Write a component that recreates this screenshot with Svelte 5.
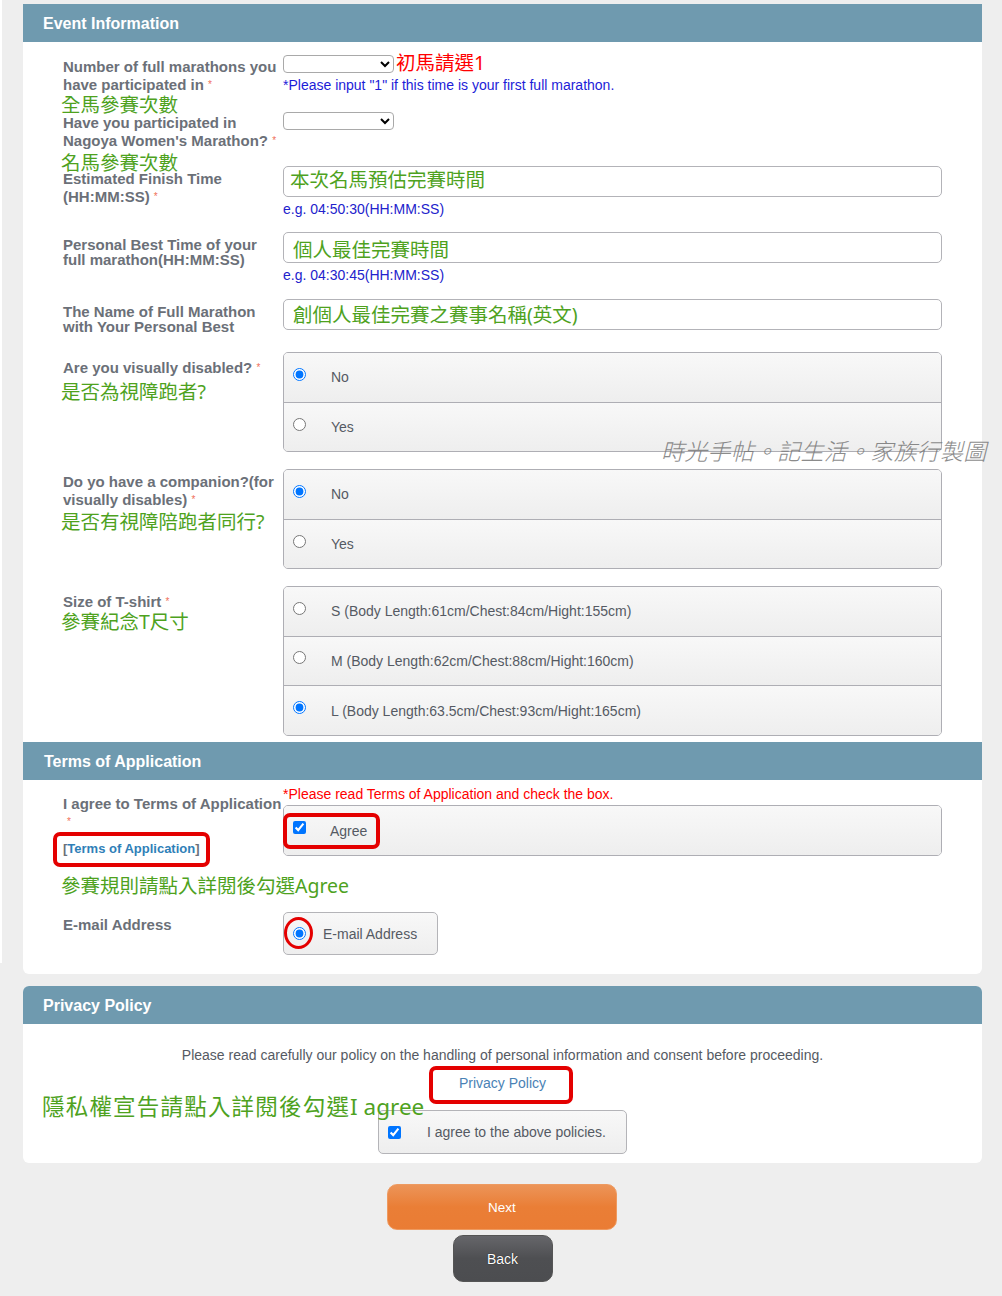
<script>
  const sizes = [
    { label: 'S (Body Length:61cm/Chest:84cm/Hight:155cm)', checked: false },
    { label: 'M (Body Length:62cm/Chest:88cm/Hight:160cm)', checked: false },
    { label: 'L (Body Length:63.5cm/Chest:93cm/Hight:165cm)', checked: true }
  ];
</script>

<div class="strip"></div>
<main class="page">
  <section class="card first">
    <h2>Event Information</h2>

    <div class="row r1">
      <div class="lab tall">Number of full marathons you have participated in <span class="req">*</span></div>
      <div class="ctl">
        <select class="sel"><option></option></select>
        <div class="note blue">*Please input "1" if this time is your first full marathon.</div>
      </div>
    </div>

    <div class="row r2">
      <div class="lab tall">Have you participated in Nagoya Women's Marathon? <span class="req">*</span></div>
      <div class="ctl"><select class="sel"><option></option></select></div>
    </div>

    <div class="row r3">
      <div class="lab tall">Estimated Finish Time (HH:MM:SS) <span class="req">*</span></div>
      <div class="ctl">
        <div class="inp in1">本次名馬預估完賽時間</div>
        <div class="hint">e.g. 04:50:30(HH:MM:SS)</div>
      </div>
    </div>

    <div class="row r4">
      <div class="lab">Personal Best Time of your full marathon(HH:MM:SS)</div>
      <div class="ctl">
        <div class="inp in2">個人最佳完賽時間</div>
        <div class="hint">e.g. 04:30:45(HH:MM:SS)</div>
      </div>
    </div>

    <div class="row r5">
      <div class="lab">The Name of Full Marathon with Your Personal Best</div>
      <div class="ctl"><div class="inp in3">創個人最佳完賽之賽事名稱(英文)</div></div>
    </div>

    <div class="row r6">
      <div class="lab">Are you visually disabled? <span class="req">*</span></div>
      <div class="group">
        <label class="opt"><input type="radio" name="vd" checked /><span>No</span></label>
        <label class="opt"><input type="radio" name="vd" /><span>Yes</span></label>
      </div>
    </div>

    <div class="row r7">
      <div class="lab tall">Do yo have a companion?(for visually disables) <span class="req">*</span></div>
      <div class="group">
        <label class="opt"><input type="radio" name="co" checked /><span>No</span></label>
        <label class="opt"><input type="radio" name="co" /><span>Yes</span></label>
      </div>
    </div>

    <div class="row r8">
      <div class="lab">Size of T-shirt <span class="req">*</span></div>
      <div class="group">
        {#each sizes as s}
          <label class="opt"><input type="radio" name="sz" checked={s.checked} /><span>{s.label}</span></label>
        {/each}
      </div>
    </div>

    <h2 class="terms">Terms of Application</h2>

    <div class="row r9">
      <div class="lab tall lab9">
        <div class="nowrap">I agree to Terms of Application</div>
        <div class="req star">*</div>
        <a class="tlink" href="#terms">[<span>Terms of Application</span>]</a>
      </div>
      <div class="ctl">
        <div class="note red">*Please read Terms of Application and check the box.</div>
        <div class="group agree">
          <label class="opt"><input type="checkbox" checked /><span>Agree</span></label>
        </div>
      </div>
    </div>

    <div class="row r10">
      <div class="lab">E-mail Address</div>
      <label class="mailbox"><input type="radio" checked /><span>E-mail Address</span></label>
    </div>

    <div class="an red-an a1">初馬請選1</div>
    <div class="an a2">全馬參賽次數</div>
    <div class="an a3">名馬參賽次數</div>
    <div class="an a4">是否為視障跑者?</div>
    <div class="an a5">是否有視障陪跑者同行?</div>
    <div class="an a6">參賽紀念T尺寸</div>
    <div class="an a7">參賽規則請點入詳閱後勾選Agree</div>
    <div class="ring b1"></div>
    <div class="ring b2"></div>
    <div class="ring b3"></div>
    <div class="mark">時光手帖。記生活。家族行製圖</div>
  </section>

  <section class="card second">
    <h2>Privacy Policy</h2>
    <p class="policy">Please read carefully our policy on the handling of personal information and consent before proceeding.</p>
    <a class="plink" href="#privacy">Privacy Policy</a>
    <label class="pagree"><input type="checkbox" checked /><span>I agree to the above policies.</span></label>
    <div class="an a8"><span class="wide">隱私權宣告請點入詳閱後勾選</span>I agree</div>
    <div class="ring b4"></div>
  </section>

  <div class="actions">
    <button class="btn next">Next</button>
    <button class="btn back">Back</button>
  </div>
</main>

<style>
  :global(body) { margin: 0; background: #eee; }
  .strip { position: absolute; left: 0; top: 0; width: 2px; height: 963px; background: #fff; }
  .page {
    box-sizing: border-box;
    height: 1296px;
    padding: 4px 20px 0 23px;
    font-family: "Liberation Sans", Arial, sans-serif;
    color: #5b6069;
  }
  .card { position: relative; background: #fff; border-radius: 0 0 6px 6px; }
  .first { height: 970px; }
  .second { height: 177px; margin-top: 12px; border-radius: 6px; }
  h2 {
    margin: 0;
    height: 38px;
    line-height: 39px;
    padding-left: 20px;
    background: #6f9aaf;
    color: #fff;
    font-size: 16px;
    font-weight: 700;
    box-sizing: border-box;
  }
  .second h2 { border-radius: 6px 6px 0 0; }
  .terms { position: absolute; left: 0; right: 0; top: 738px; padding-left: 21px; }

  .row { box-sizing: border-box; display: grid; grid-template-columns: 220px 659px; padding-left: 40px; }
  .lab { font-size: 15px; font-weight: 700; color: #6b7078; line-height: 15px; }
  .tall { line-height: 18px; }
  .req { color: #f0705a; font-size: 10px; font-weight: 400; vertical-align: 2px; }
  .sel {
    display: block;
    width: 111px;
    height: 18px;
    box-sizing: border-box;
    background: #fff;
    border: 1px solid #a9a9a9;
    border-radius: 4px;
    font-size: 12px;
    padding: 0;
  }
  .note { font-size: 14px; line-height: 16px; }
  .blue { color: #1c1cd8; margin-top: 4px; }
  .red { color: #f00; height: 19px; margin-top: 6px; }

  .r1 { padding-top: 13px; height: 70px; }
  .r1 .lab { margin-top: 3px; }
  .r2 { height: 41px; }
  .r2 .lab { margin-top: 2px; }
  .r3 { margin-top: 13px; height: 53px; }
  .r3 .lab { margin-top: 4px; }
  .r4 { margin-top: 13px; height: 54px; }
  .r4 .lab { margin-top: 5px; }
  .r5 { margin-top: 13px; height: 30px; }
  .r5 .lab { margin-top: 5px; }
  .r6 { margin-top: 23px; height: 100px; }
  .r6 .lab { margin-top: 8px; }
  .r7 { margin-top: 17px; height: 100px; }
  .r7 .lab { margin-top: 4px; }
  .r8 { margin-top: 17px; height: 150px; }
  .r8 .lab { margin-top: 8px; }

  .inp {
    box-sizing: border-box;
    height: 31px;
    border: 1px solid #b3b3b8;
    border-radius: 5px;
    padding-left: 9px;
    font: 400 19.5px/27px "Noto Sans", "Noto Sans CJK TC", sans-serif;
    color: #4ea21e;
    background: #fff;
    white-space: nowrap;
  }
  .in1 { padding-left: 6px; line-height: 25px; }
  .in2 { line-height: 33px; }
  .in3 { line-height: 29px; }
  .hint { font-size: 14px; line-height: 16px; color: #2222cc; margin-top: 4px; }

  .group {
    box-sizing: border-box;
    border: 1px solid #aeaeb4;
    border-radius: 5px;
    overflow: hidden;
    background: #f1f1f1;
  }
  .opt {
    box-sizing: border-box;
    display: flex;
    align-items: center;
    height: 49.5px;
    padding-left: 9px;
    font-size: 14px;
    color: #555a63;
    background: linear-gradient(#f8f8f8, #eeeeee);
    border-bottom: 1px solid #aeaeb4;
  }
  .opt:last-child { border-bottom: 0; }
  input[type="radio"], input[type="checkbox"] { margin: 0; width: 13px; height: 13px; flex: none; position: relative; top: -3px; }
  .opt span { margin-left: 25px; }

  .r9 { position: absolute; top: 776px; left: 0; width: 100%; }
  .lab9 { padding-top: 15px; }
  .nowrap { white-space: nowrap; }
  .star { line-height: 18px; margin-left: 4px; height: 18px; }
  .tlink { display: block; margin-top: 10px; font-size: 13px; line-height: 16px; color: #6b7078; text-decoration: none; white-space: nowrap; }
  .tlink span { color: #2f7fb8; }
  .agree { height: 51px; }
  .agree .opt { height: 49px; }
  .agree .opt span { margin-left: 24px; }

  .r10 { position: absolute; top: 908px; left: 0; width: 100%; }
  .r10 .lab { margin-top: 5px; }
  .mailbox {
    box-sizing: border-box;
    display: flex;
    align-items: center;
    width: 155px;
    height: 43px;
    padding-left: 9px;
    border: 1px solid #b4b4b8;
    border-radius: 5px;
    background: linear-gradient(#f8f8f8, #eeeeee);
    font-size: 14px;
    color: #555a63;
  }
  .mailbox input { top: 0; }
  .mailbox span { margin-left: 17px; }

  .an {
    position: absolute;
    font: 400 19.5px/26px "Noto Sans", "Noto Sans CJK TC", sans-serif;
    color: #4ea21e;
    white-space: nowrap;
  }
  .red-an { color: #f00; left: 373px; top: 46px; }
  .a2 { left: 38px; top: 88px; }
  .a3 { left: 38px; top: 146px; }
  .a4 { left: 38px; top: 375px; }
  .a5 { left: 38px; top: 505px; }
  .a6 { left: 38px; top: 605px; }
  .a7 { left: 38px; top: 869px; }
  .a8 { left: 19px; top: 108px; font-size: 22.5px; }
  .wide { letter-spacing: 1.2px; }

  .ring { position: absolute; box-sizing: border-box; border: 4px solid #e40000; border-radius: 7px; }
  .b1 { left: 30px; top: 828px; width: 157px; height: 35px; }
  .b2 { left: 260px; top: 809px; width: 97px; height: 36px; }
  .b3 { left: 261px; top: 913px; width: 29px; height: 32px; border-width: 3px; border-radius: 50%; }
  .b4 { left: 406px; top: 80px; width: 144px; height: 38px; }

  .mark {
    position: absolute;
    left: 638px;
    top: 431px;
    font: 200 23px/30px "Noto Sans CJK TC", sans-serif;
    font-style: italic;
    letter-spacing: 0.25px;
    color: #777;
    white-space: nowrap;
    opacity: 0.85;
  }

  .policy { margin: 0; padding-top: 23px; text-align: center; font-size: 14px; line-height: 16px; color: #555a63; }
  .plink { display: block; margin-top: 12px; text-align: center; font-size: 14px; line-height: 16px; color: #4a82b5; text-decoration: none; }
  .pagree {
    box-sizing: border-box;
    display: flex;
    align-items: center;
    width: 249px;
    height: 44px;
    margin: 19px 0 0 355px;
    padding-left: 9px;
    border: 1px solid #b4b4b8;
    border-radius: 5px;
    background: linear-gradient(#f8f8f8, #eeeeee);
    font-size: 14px;
    color: #555a63;
  }
  .pagree input { top: 0; }
  .pagree span { margin-left: 26px; }

  .actions { display: flex; flex-direction: column; align-items: center; padding-top: 21px; gap: 5px; }
  .btn { font: 14px "Liberation Sans", Arial, sans-serif; color: #fff; border-radius: 10px; cursor: pointer; padding: 0; }
  .next { width: 230px; height: 46px; margin-right: 1px; font-size: 13.5px; border: 1px solid #ee9a60; background: linear-gradient(#ec9458, #ea7e36 50%, #ea7c34); }
  .back { width: 100px; height: 47px; border: 1px solid #555; background: linear-gradient(#66666a, #4e4f52 50%, #4c4d50); text-shadow: 0 0 1px #000; }
</style>
